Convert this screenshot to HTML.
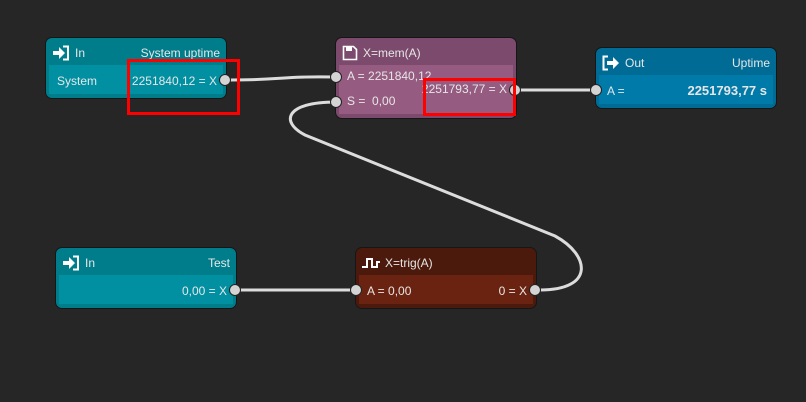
<!DOCTYPE html>
<html><head><style>
body{margin:0;width:806px;height:402px;background:#262626;position:relative;overflow:hidden;font-family:"Liberation Sans",sans-serif;font-size:12px;color:#e6e6e6}
.n{position:absolute;width:180px;border-radius:6px;overflow:hidden;box-shadow:0 0 0 1px rgba(0,0,0,.4)}
.h{height:27px;display:flex;align-items:center;padding:2px 6px 0 6px;box-sizing:border-box;justify-content:space-between}
.h span.t{display:flex;align-items:center;gap:5px}
.b{position:relative;margin:0 3px 3px 3px}
.p{position:absolute;width:10px;height:10px;border-radius:50%;background:#d4d4d4;border:1.5px solid #222}
.lbl{position:absolute;white-space:nowrap}
.rb{position:absolute;border:3px solid #f00;box-sizing:border-box}
</style></head><body>
<svg width="806" height="402" style="position:absolute;left:0;top:0" fill="none" stroke="#dcdcdc" stroke-width="3">
<path d="M230,80 C285,80 280,76 336,77"/>
<path d="M520,90 L597,90"/>
<path d="M240,290 L356,290"/>
<path d="M540,290 C595,290 590,255 555,236 L305,135 C280,122 285,102 336,102"/>
</svg>

<div class="n" style="left:46px;top:38px;height:60px;background:#007d8b">
 <div class="h"><span class="t"><svg width="18" height="16" viewBox="0 0 18 16"><path d="M1 6h6V2l6 6-6 6v-4H1z" fill="#fff"/><path d="M11 1.5h5v13h-5" fill="none" stroke="#fff" stroke-width="2"/></svg>In</span><span>System uptime</span></div>
 <div class="b" style="background:#0090a2;height:29px"><span class="lbl" style="left:8px;top:9px">System</span><span class="lbl" style="right:6px;top:9px">2251840,12 = X</span></div>
</div>
<div class="p" style="left:219px;top:74px"></div>

<div class="n" style="left:336px;top:38px;height:80px;background:#7c4a6c">
 <div class="h"><span class="t"><svg width="16" height="16" viewBox="0 0 16 16"><path d="M1.5 1.5h10l3 3v10h-13z" fill="none" stroke="#fff" stroke-width="1.6"/><rect x="4" y="2" width="6" height="4" fill="#fff"/></svg>X=mem(A)</span></div>
 <div class="b" style="background:#965b80;height:49px"><span class="lbl" style="left:8px;top:4px">A = 2251840,12</span><span class="lbl" style="left:8px;top:29px">S =&nbsp; 0,00</span><span class="lbl" style="right:6px;top:17px">2251793,77 = X</span></div>
</div>
<div class="p" style="left:330px;top:71px"></div>
<div class="p" style="left:330px;top:96px"></div>
<div class="p" style="left:509px;top:84px"></div>

<div class="n" style="left:596px;top:48px;height:60px;background:#006c96">
 <div class="h"><span class="t"><svg width="18" height="16" viewBox="0 0 18 16"><path d="M6 1.5H1.5v13H6" fill="none" stroke="#fff" stroke-width="2"/><path d="M5 6h6V2l6 6-6 6v-4H5z" fill="#fff"/></svg>Out</span><span>Uptime</span></div>
 <div class="b" style="background:#007aa9;height:29px"><span class="lbl" style="left:8px;top:9px">A =</span><span class="lbl" style="right:6px;top:8px;font-weight:bold;font-size:13px">2251793,77 s</span></div>
</div>
<div class="p" style="left:590px;top:84px"></div>

<div class="n" style="left:56px;top:248px;height:60px;background:#007d8b">
 <div class="h"><span class="t"><svg width="18" height="16" viewBox="0 0 18 16"><path d="M1 6h6V2l6 6-6 6v-4H1z" fill="#fff"/><path d="M11 1.5h5v13h-5" fill="none" stroke="#fff" stroke-width="2"/></svg>In</span><span>Test</span></div>
 <div class="b" style="background:#0090a2;height:29px"><span class="lbl" style="right:6px;top:9px">0,00 = X</span></div>
</div>
<div class="p" style="left:229px;top:284px"></div>

<div class="n" style="left:356px;top:248px;height:60px;background:#4b1a0c">
 <div class="h"><span class="t"><svg width="18" height="12" viewBox="0 0 18 12"><path d="M0 10h5V2h5v8h5V5h3" fill="none" stroke="#fff" stroke-width="2"/></svg>X=trig(A)</span></div>
 <div class="b" style="background:#6b2311;height:29px"><span class="lbl" style="left:8px;top:9px">A = 0,00</span><span class="lbl" style="right:6px;top:9px">0 = X</span></div>
</div>
<div class="p" style="left:350px;top:284px"></div>
<div class="p" style="left:529px;top:284px"></div>

<div class="rb" style="left:127px;top:59px;width:113px;height:56px"></div>
<div class="rb" style="left:423px;top:78px;width:93px;height:38px"></div>
</body></html>
